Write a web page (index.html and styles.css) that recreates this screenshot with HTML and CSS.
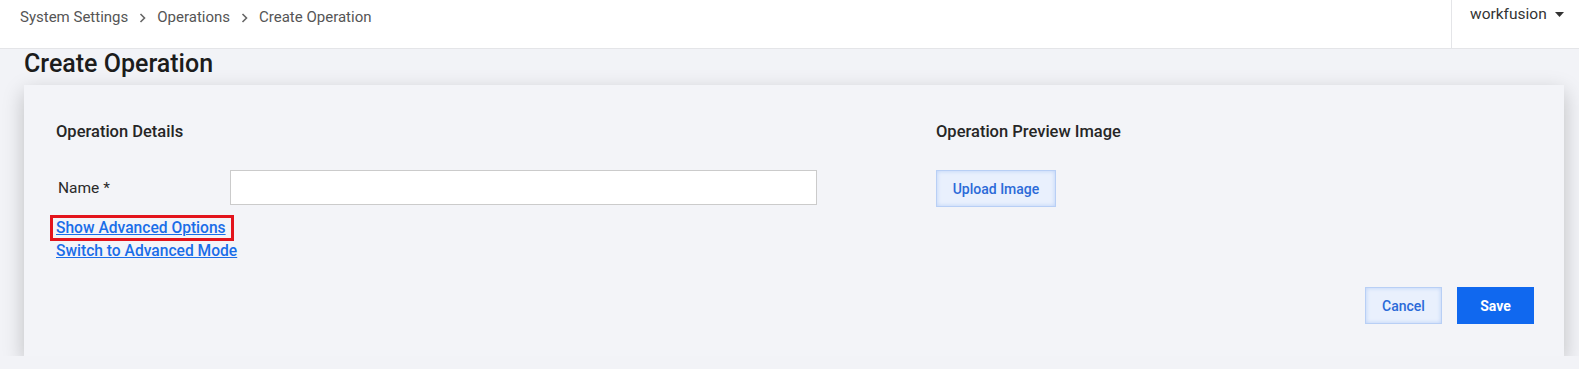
FILE: index.html
```html
<!DOCTYPE html>
<html lang="en">
<head>
  <meta charset="UTF-8">
  <link rel="stylesheet" href="styles.css">
  <title>Create Operation</title>
</head>
<body>

  <header class="topbar">
    <nav class="crumbs">
      <span>System Settings</span>
      <svg class="chev" width="7" height="10" viewBox="0 0 7 10"><path d="M1.5 1l4 4-4 4" fill="none" stroke="#666" stroke-width="1.6"/></svg>
      <span>Operations</span>
      <svg class="chev" width="7" height="10" viewBox="0 0 7 10"><path d="M1.5 1l4 4-4 4" fill="none" stroke="#666" stroke-width="1.6"/></svg>
      <span>Create Operation</span>
    </nav>
    <div class="user-menu">
      <span>workfusion</span>
      <svg width="9" height="5" viewBox="0 0 9 5"><path d="M0 0h9L4.5 5z" fill="#333"/></svg>
    </div>
  </header>

  <main class="page">
    <h1 class="page-title">Create Operation</h1>

    <section class="card">
      <div class="card-cols">
        <div class="col-details">
          <h3 class="col-title">Operation Details</h3>
          <div class="form-row">
            <label for="opName">Name *</label>
            <input type="text" id="opName" name="opName">
          </div>
          <div class="links">
            <div class="highlight"><a href="#">Show Advanced Options</a></div>
            <div><a href="#">Switch to Advanced Mode</a></div>
          </div>
        </div>
        <div class="col-preview">
          <h3 class="col-title">Operation Preview Image</h3>
          <button class="btn btn-light">Upload Image</button>
        </div>
      </div>
      <div class="card-actions">
        <button class="btn btn-light">Cancel</button>
        <button class="btn btn-primary">Save</button>
      </div>
    </section>
  </main>

</body>
</html>
```

FILE: styles.css
```css
body {
  margin: 0;
  background-color: #f2f3f7;
  font-family: Roboto, 'Liberation Sans', sans-serif;
  overflow: hidden;
}

.topbar {
  display: flex;
  justify-content: space-between;
  height: 48px;
  background-color: #fff;
  border-bottom: 1px solid #e4e5e8;
}

.crumbs {
  display: flex;
  align-items: center;
  gap: 11px;
  height: 20px;
  padding: 7px 0 0 20px;
  font-size: 15px;
  line-height: 20px;
  color: #555;
}

.chev {
  margin-top: 1px;
}

.user-menu {
  display: flex;
  align-items: flex-start;
  gap: 8px;
  width: 109px;
  padding: 4px 0 0 18px;
  border-left: 1px solid #e4e5e8;
  font-size: 15.5px;
  line-height: 20px;
  color: #333;
}

.user-menu svg {
  margin-top: 8px;
}

.page {
  padding: 1px 15px 0 24px;
}

.page-title {
  margin: 0 0 7px;
  font-size: 25px;
  font-weight: 500;
  line-height: 28px;
  color: #1c1c1c;
}

.card {
  padding: 37px 30px 32px 32px;
  background-color: #f3f4f8;
  box-shadow: 0 7px 20px rgba(0, 0, 0, 0.22);
}

.card-cols {
  display: grid;
  grid-template-columns: 880px 1fr;
}

.col-title {
  margin: 0;
  font-size: 16.5px;
  font-weight: 500;
  line-height: 19px;
  color: #262626;
}

.form-row {
  display: flex;
  align-items: center;
  margin-top: 29px;
}

.form-row label {
  width: 172px;
  padding-left: 2px;
  font-size: 15.5px;
  color: #2a2a2a;
}

.form-row input {
  box-sizing: border-box;
  width: 587px;
  height: 35px;
  border: 1px solid #cbcbcb;
  background-color: #fff;
}

.links {
  margin-top: 10px;
  font-size: 15.6px;
  font-weight: 500;
  line-height: 20px;
}

.links a {
  color: #1a6de8;
  text-decoration: underline;
}

.highlight {
  display: inline-block;
  margin-left: -6px;
  padding: 0 5px 0 3px;
  border: 3px solid #e3141c;
}

.col-preview .btn {
  margin-top: 29px;
}

.btn {
  box-sizing: border-box;
  height: 37px;
  font-family: inherit;
  font-size: 14px;
  font-weight: 500;
  cursor: pointer;
}

.btn-light {
  padding: 0 14px;
  border: 1px solid #b8cff5;
  background-color: #e9f0fd;
  color: #2b6ad8;
  box-shadow: inset 0 0 4px #b9d0f7;
}

.col-preview .btn-light {
  width: 120px;
}

.card-actions {
  display: flex;
  justify-content: flex-end;
  gap: 15px;
  margin-top: 26px;
}

.card-actions .btn {
  width: 77px;
}

.btn-primary {
  border: none;
  background-color: #1068ef;
  color: #fff;
  font-weight: 700;
}
```
